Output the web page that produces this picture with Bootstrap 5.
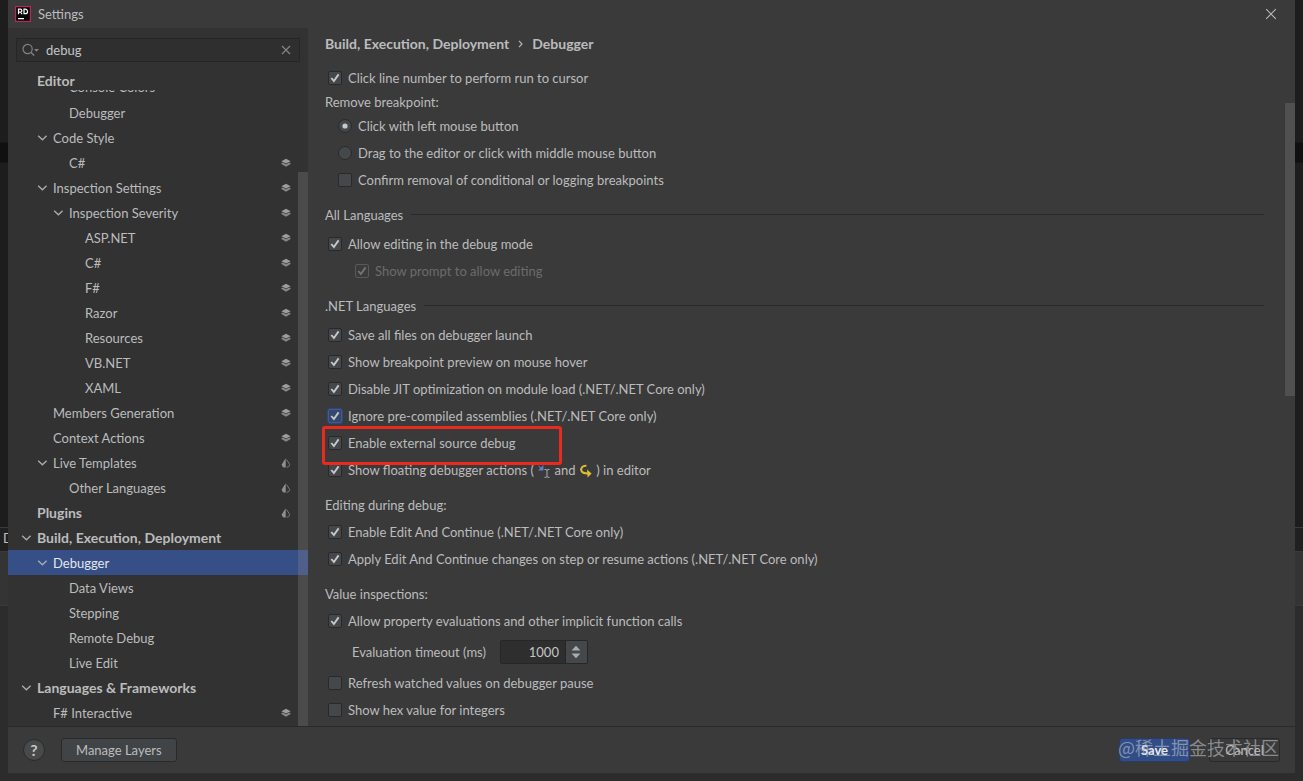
<!DOCTYPE html>
<html lang="en" data-bs-theme="dark">
<head>
<meta charset="utf-8">
<meta name="viewport" content="width=device-width, initial-scale=1">
<title>Settings</title>
<link href="https://cdn.jsdelivr.net/npm/bootstrap@5.3.0/dist/css/bootstrap.min.css" rel="stylesheet">
<style>
  :root {
    --ui-text: #bbbcbd;
    --ui-panel: #3a3a3a;
    --ui-side: #323232;
    --ui-line: #2a2a2b;
    --ui-control: #45484b;
  }
  body {
    background: #2a2a2a;
    color: var(--ui-text);
    font: 13px/20px Lato, "Noto Sans CJK SC", sans-serif;
  }
  b, .strong-text { font-size: 14px; font-weight: 700; }

  /* editor window behind the dialog */
  .backdrop { z-index: -1; background: #2c2c2c; }
  .backdrop > div { border-bottom: 1px solid #3a3a3a; }
  .backdrop > .bd-editor, .backdrop > .bd-current { border-color: #161616; }
  .bd-editor { height: 143px; background: #1d1d1d; }
  .bd-current { height: 20px; background: #101010; }
  .bd-code { height: 365px; background: #1d1d1d; }
  .bd-tabs { height: 24px; background: #202020; padding-left: 3px; }
  .bd-tools { height: 54px; background: #343434; }

  .dialog { height: calc(100vh - 8px); margin: 0 8px; background: var(--ui-panel); }
  .title-bar { height: 28px; padding: 0 17px 0 7px; gap: 7px; }
  .plain-btn { background: none; border: 0; padding: 0; color: inherit; line-height: 0; }

  /* sidebar */
  .sidebar { width: 300px; background: var(--ui-side); }
  .search-box { margin: 10px 8px 7px; height: 24px; border: 1px solid #262626; background: #2f2f2f; padding: 0 8px 0 5px; gap: 6px; }
  .search-box input { background: none; border: 0; outline: 0; padding: 0; color: #c4c5c6; min-width: 0; }
  .tree-sticky { height: 21px; padding: 2px 0 0 29px; }
  .tree-item { height: 25px; padding-right: 17px; color: inherit; text-decoration: none; }
  .tree-item.cut { height: 10px; overflow: hidden; }
  .tree-item.cut span { margin-top: -13px; line-height: 21px; }
  .tree-item > svg:first-child { margin-right: 5px; }
  .tree-item span { white-space: nowrap; }
  .lv1 { padding-left: 29px; } .lv2 { padding-left: 45px; } .lv3 { padding-left: 61px; } .lv4 { padding-left: 77px; }
  .open-item { margin-left: -16px; }
  .tree-item.chosen { background: #365087; color: #e4e6ea; }
  .thumb { position: absolute; right: 0; width: 10px; background: rgba(140, 141, 145, .28); }
  .side-thumb { top: 144px; bottom: 0; }
  .page-thumb { top: 75px; height: 42%; }

  /* settings page */
  .settings-page { padding: 5px 31px 0 17px; }
  .crumbs { height: 22px; margin-bottom: 9px; gap: 9px; }
  .opt { height: 27px; gap: 6px; padding-left: 3px; position: relative; }
  .opt.indent { padding-left: 13px; }
  .opt.nested { padding-left: 30px; margin-bottom: 2px; color: #6b6c6d; }
  .group-label { height: 21px; }
  .section-label { height: 27px; margin-top: 8px; }
  .ruled { margin-bottom: 2px; gap: 8px; }
  .ruled::after { content: ""; flex: 1; height: 1px; background: var(--ui-line); }
  .opt .form-check-input, .opt .form-check-input:focus {
    width: 14px; height: 14px; margin: 0; flex: none; box-shadow: none;
    background-color: var(--ui-control); border: 1px solid #29292b;
  }
  .opt .form-check-input[type=checkbox] { border-radius: 2px; }
  .opt .form-check-input:checked[type=checkbox] {
    background-size: 12px 12px;
    background-image: url("data:image/svg+xml,%3Csvg xmlns='http://www.w3.org/2000/svg' viewBox='0 0 12 12'%3E%3Cpath d='M2.3 6l2.6 3L9.600 2.400' fill='none' stroke='%23c6c8ca' stroke-width='1.9'/%3E%3C/svg%3E");
  }
  .opt .form-check-input:checked[type=radio] {
    background-image: url("data:image/svg+xml,%3Csvg xmlns='http://www.w3.org/2000/svg' viewBox='0 0 12 12'%3E%3Ccircle cx='6' cy='6' r='2.6' fill='%23c6c8ca'/%3E%3C/svg%3E");
  }
  .opt .form-check-input:disabled { opacity: .4; background-color: #3c3d3e; border-color: #86888a; }
  .opt .form-check-input.focused { background-color: #35476a; border-color: #3f5a94; box-shadow: 0 0 0 1px #2f4676; }
  .opt label { opacity: 1 !important; white-space: nowrap; }
  .callout-frame { position: absolute; left: -3px; top: -3px; width: 240px; height: 39px; border: 3px solid #ea2a1f; border-radius: 3px; z-index: 1; pointer-events: none; }
  .timeout-row { height: 35px; padding-left: 27px; gap: 14px; }
  .spinner-box { width: 88px; height: 24px; border: 1px solid #262627; border-radius: 2px; background: #2e2e2e; }
  .spinner-box input { width: 64px; padding: 0 6px 0 0; background: none; border: 0; outline: 0; color: #c4c5c6; text-align: right; }
  .spinner-box .plain-btn { background: var(--ui-control); border-left: 1px solid #262627; }

  /* footer */
  .dialog-footer { height: 47px; border-top: 1px solid var(--ui-line); padding: 0 15px; }
  .help-btn { width: 22px; height: 22px; border: 1px solid #2a2b2c; border-radius: 50%; background: #47494b; color: #c4c5c6; padding: 0; font-size: 16px; font-weight: 700; line-height: 20px; }
  .flat-btn { height: 24px; padding: 0 14px; font-size: 13px; line-height: 20px; color: var(--ui-text); border: 1px solid #29292a; border-radius: 3px; background: #414447; }
  .end-btn { width: 71px; padding: 0; }
  .end-btn + .end-btn { margin-left: 19px; }
  .save-btn { background: #304d88; border-color: #2b3c62; color: #e8ebf0; font-weight: 700; }
  .cancel-btn { background: #3a3a3b; }
  .stamp { position: absolute; right: 16px; top: 7px; font: 18px/26px "Noto Sans CJK SC", sans-serif; color: rgba(190, 193, 198, .6); white-space: nowrap; pointer-events: none; }
</style>
</head>
<body class="overflow-hidden">
<svg class="d-none" aria-hidden="true">
  <symbol id="chev" viewBox="0 0 11 10"><path d="M1.2 2.8l4.2 4 4.2-4" fill="none" stroke="#a9abad" stroke-width="1.4"/></symbol>
  <symbol id="layers" viewBox="0 0 10 10"><path d="M5 .8L9.6 3.2 5 5.6.4 3.2z" fill="#9b9da0"/><path d="M.4 5.2l1.4-.7L5 6.2l3.2-1.7 1.4.7v.9L5 8.8.4 6.1z" fill="#85878a"/></symbol>
  <symbol id="drop" viewBox="0 0 10 10"><path d="M4.7.3v9.2H2.600Q.7 8.400.9 6.200z" fill="#8f9194"/><path d="M5.6 1.6L8.6 6.3Q8.8 8.4 7 9.1H5.6" fill="none" stroke="#77797c"/></symbol>
</svg>

<div class="backdrop position-fixed top-0 start-0 w-100 h-100" aria-hidden="true">
  <div class="bd-editor"></div>
  <div class="bd-current"></div>
  <div class="bd-code"></div>
  <div class="bd-tabs">D</div>
  <div class="bd-tools"></div>
</div>

<div class="dialog d-flex flex-column" role="dialog" aria-label="Settings">
  <header class="title-bar d-flex align-items-center">
    <svg width="16" height="16" viewBox="0 0 16 16" aria-hidden="true"><rect x=".6" y=".6" width="14.8" height="14.8" fill="#050505" stroke="#b9285c" stroke-width="1.2"/><path d="M3.5 8.2V3.2h1.9a1.4 1.4 0 010 2.9H3.6M5.6 6l1.4 2.2M9 3.2v4.5h1.3a2.2 2.2 0 000-4.5zM3 12.6h6" fill="none" stroke="#fff" stroke-width="1.2"/></svg>
    <span>Settings</span>
    <button type="button" class="plain-btn ms-auto" aria-label="Close"><svg width="14" height="14" viewBox="0 0 14 14"><path d="M2.2 2.2l9.6 9.6M11.8 2.2L2.2 11.8" stroke="#b8babc" stroke-width="1.1"/></svg></button>
  </header>

  <div class="d-flex flex-grow-1 overflow-hidden">
    <aside class="sidebar position-relative flex-shrink-0 overflow-hidden">
      <div class="search-box d-flex align-items-center">
        <svg width="18" height="14" viewBox="0 0 18 14" aria-hidden="true"><circle cx="5.6" cy="6" r="4.6" fill="none" stroke="#808285" stroke-width="1.2"/><path d="M9 9.4l3.2 3.2" stroke="#808285" stroke-width="1.4"/><path d="M12 6h5l-2.5 2.8z" fill="#808285"/></svg>
        <input type="text" class="flex-grow-1" value="debug" aria-label="Search settings">
        <button type="button" class="plain-btn" aria-label="Clear search"><svg width="10" height="10" viewBox="0 0 10 10"><path d="M1 1l8 8M9 1L1 9" stroke="#85878a" stroke-width="1.1"/></svg></button>
      </div>
      <nav aria-label="Settings sections">
        <div class="tree-sticky strong-text">Editor</div>
        <a href="#" class="tree-item cut d-flex lv3"><span>Console Colors</span></a>
        <a href="#" class="tree-item d-flex align-items-center lv3"><span>Debugger</span></a>
        <a href="#" class="tree-item d-flex align-items-center lv2"><svg class="open-item" width="11" height="10"><use href="#chev"/></svg><span>Code Style</span></a>
        <a href="#" class="tree-item d-flex align-items-center lv3"><span>C#</span><svg class="ms-auto" width="10" height="10"><use href="#layers"/></svg></a>
        <a href="#" class="tree-item d-flex align-items-center lv2"><svg class="open-item" width="11" height="10"><use href="#chev"/></svg><span>Inspection Settings</span><svg class="ms-auto" width="10" height="10"><use href="#layers"/></svg></a>
        <a href="#" class="tree-item d-flex align-items-center lv3"><svg class="open-item" width="11" height="10"><use href="#chev"/></svg><span>Inspection Severity</span><svg class="ms-auto" width="10" height="10"><use href="#layers"/></svg></a>
        <a href="#" class="tree-item d-flex align-items-center lv4"><span>ASP.NET</span><svg class="ms-auto" width="10" height="10"><use href="#layers"/></svg></a>
        <a href="#" class="tree-item d-flex align-items-center lv4"><span>C#</span><svg class="ms-auto" width="10" height="10"><use href="#layers"/></svg></a>
        <a href="#" class="tree-item d-flex align-items-center lv4"><span>F#</span><svg class="ms-auto" width="10" height="10"><use href="#layers"/></svg></a>
        <a href="#" class="tree-item d-flex align-items-center lv4"><span>Razor</span><svg class="ms-auto" width="10" height="10"><use href="#layers"/></svg></a>
        <a href="#" class="tree-item d-flex align-items-center lv4"><span>Resources</span><svg class="ms-auto" width="10" height="10"><use href="#layers"/></svg></a>
        <a href="#" class="tree-item d-flex align-items-center lv4"><span>VB.NET</span><svg class="ms-auto" width="10" height="10"><use href="#layers"/></svg></a>
        <a href="#" class="tree-item d-flex align-items-center lv4"><span>XAML</span><svg class="ms-auto" width="10" height="10"><use href="#layers"/></svg></a>
        <a href="#" class="tree-item d-flex align-items-center lv2"><span>Members Generation</span><svg class="ms-auto" width="10" height="10"><use href="#layers"/></svg></a>
        <a href="#" class="tree-item d-flex align-items-center lv2"><span>Context Actions</span><svg class="ms-auto" width="10" height="10"><use href="#layers"/></svg></a>
        <a href="#" class="tree-item d-flex align-items-center lv2"><svg class="open-item" width="11" height="10"><use href="#chev"/></svg><span>Live Templates</span><svg class="ms-auto" width="10" height="10"><use href="#drop"/></svg></a>
        <a href="#" class="tree-item d-flex align-items-center lv3"><span>Other Languages</span><svg class="ms-auto" width="10" height="10"><use href="#drop"/></svg></a>
        <a href="#" class="tree-item d-flex align-items-center lv1 strong-text"><span>Plugins</span><svg class="ms-auto" width="10" height="10"><use href="#drop"/></svg></a>
        <a href="#" class="tree-item d-flex align-items-center lv1 strong-text"><svg class="open-item" width="11" height="10"><use href="#chev"/></svg><span>Build, Execution, Deployment</span></a>
        <a href="#" class="tree-item chosen d-flex align-items-center lv2" aria-current="page"><svg class="open-item" width="11" height="10"><use href="#chev"/></svg><span>Debugger</span></a>
        <a href="#" class="tree-item d-flex align-items-center lv3"><span>Data Views</span></a>
        <a href="#" class="tree-item d-flex align-items-center lv3"><span>Stepping</span></a>
        <a href="#" class="tree-item d-flex align-items-center lv3"><span>Remote Debug</span></a>
        <a href="#" class="tree-item d-flex align-items-center lv3"><span>Live Edit</span></a>
        <a href="#" class="tree-item d-flex align-items-center lv1 strong-text"><svg class="open-item" width="11" height="10"><use href="#chev"/></svg><span>Languages &amp; Frameworks</span></a>
        <a href="#" class="tree-item d-flex align-items-center lv2"><span>F# Interactive</span><svg class="ms-auto" width="10" height="10"><use href="#layers"/></svg></a>
      </nav>
      <div class="thumb side-thumb"></div>
    </aside>

    <main class="settings-page position-relative flex-grow-1 overflow-hidden">
      <div class="crumbs d-flex align-items-center"><b>Build, Execution, Deployment</b>
        <svg width="5" height="8" viewBox="0 0 5 8" aria-hidden="true"><path d="M1 .8L4 4 1 7.2" fill="none" stroke="#b4b6b8" stroke-width="1.2"/></svg><b>Debugger</b></div>

      <div class="opt d-flex align-items-center"><input class="form-check-input" type="checkbox" id="o1" checked><label for="o1">Click line number to perform run to cursor</label></div>
      <div class="group-label d-flex align-items-center">Remove breakpoint:</div>
      <div class="opt indent d-flex align-items-center"><input class="form-check-input" type="radio" name="rm" id="o2" checked><label for="o2">Click with left mouse button</label></div>
      <div class="opt indent d-flex align-items-center"><input class="form-check-input" type="radio" name="rm" id="o3"><label for="o3">Drag to the editor or click with middle mouse button</label></div>
      <div class="opt indent d-flex align-items-center"><input class="form-check-input" type="checkbox" id="o4"><label for="o4">Confirm removal of conditional or logging breakpoints</label></div>

      <div class="section-label ruled d-flex align-items-center">All Languages</div>
      <div class="opt d-flex align-items-center"><input class="form-check-input" type="checkbox" id="o5" checked><label for="o5">Allow editing in the debug mode</label></div>
      <div class="opt nested d-flex align-items-center"><input class="form-check-input" type="checkbox" id="o6" checked disabled><label for="o6">Show prompt to allow editing</label></div>

      <div class="section-label ruled d-flex align-items-center">.NET Languages</div>
      <div class="opt d-flex align-items-center"><input class="form-check-input" type="checkbox" id="o7" checked><label for="o7">Save all files on debugger launch</label></div>
      <div class="opt d-flex align-items-center"><input class="form-check-input" type="checkbox" id="o8" checked><label for="o8">Show breakpoint preview on mouse hover</label></div>
      <div class="opt d-flex align-items-center"><input class="form-check-input" type="checkbox" id="o9" checked><label for="o9">Disable JIT optimization on module load (.NET/.NET Core only)</label></div>
      <div class="opt d-flex align-items-center"><input class="form-check-input focused" type="checkbox" id="o10" checked><label for="o10">Ignore pre-compiled assemblies (.NET/.NET Core only)</label></div>
      <div class="opt d-flex align-items-center"><input class="form-check-input" type="checkbox" id="o11" checked><label for="o11">Enable external source debug</label><span class="callout-frame"></span></div>
      <div class="opt d-flex align-items-center"><input class="form-check-input" type="checkbox" id="o12" checked><label for="o12">Show floating debugger actions (
        <svg width="14" height="14" viewBox="0 0 14 14" aria-hidden="true"><path d="M1 1l3 2.4L6.4 1v5.4H1L3 4.6z" fill="#5b83c4"/><path d="M7.5 5.5h1.6l.9.8.9-.8h1.6M10 6v6.6M7.5 13.3h1.6l.9-.8.9.8h1.6" fill="none" stroke="#a9abad"/></svg>
        and
        <svg width="14" height="14" viewBox="0 0 14 14" aria-hidden="true"><path d="M7.4 1.7C3.4 1.4 1.6 4 2.4 6.6 3 8.7 5 9.4 9 9.4" fill="none" stroke="#e0bd2e" stroke-width="2"/><path d="M8 5.4l4.6 4L8.6 13.6z" fill="#e0bd2e"/></svg>
        ) in editor</label></div>

      <div class="section-label d-flex align-items-center">Editing during debug:</div>
      <div class="opt d-flex align-items-center"><input class="form-check-input" type="checkbox" id="o13" checked><label for="o13">Enable Edit And Continue (.NET/.NET Core only)</label></div>
      <div class="opt d-flex align-items-center"><input class="form-check-input" type="checkbox" id="o14" checked><label for="o14">Apply Edit And Continue changes on step or resume actions (.NET/.NET Core only)</label></div>

      <div class="section-label d-flex align-items-center">Value inspections:</div>
      <div class="opt d-flex align-items-center"><input class="form-check-input" type="checkbox" id="o15" checked><label for="o15">Allow property evaluations and other implicit function calls</label></div>
      <div class="timeout-row d-flex align-items-center"><label for="timeout">Evaluation timeout (ms)</label>
        <div class="spinner-box d-flex"><input type="text" inputmode="numeric" id="timeout" value="1000"><button type="button" class="plain-btn flex-grow-1" aria-label="Change timeout"><svg width="10" height="14" viewBox="0 0 10 14"><path d="M.6 5.6L5 .8l4.4 4.8zM.6 8.4L5 13.2l4.4-4.8z" fill="#a9abad"/></svg></button></div></div>
      <div class="opt d-flex align-items-center"><input class="form-check-input" type="checkbox" id="o16"><label for="o16">Refresh watched values on debugger pause</label></div>
      <div class="opt d-flex align-items-center"><input class="form-check-input" type="checkbox" id="o17"><label for="o17">Show hex value for integers</label></div>
      <div class="thumb page-thumb"></div>
    </main>
  </div>

  <footer class="dialog-footer position-relative d-flex align-items-center flex-shrink-0">
    <button type="button" class="help-btn me-3" aria-label="Help">?</button>
    <button type="button" class="btn flat-btn">Manage Layers</button>
    <button type="button" class="btn flat-btn end-btn save-btn ms-auto">Save</button>
    <button type="button" class="btn flat-btn end-btn cancel-btn">Cancel</button>
    <span class="stamp">@稀土掘金技术社区</span>
  </footer>
</div>
<script src="https://cdn.jsdelivr.net/npm/bootstrap@5.3.0/dist/js/bootstrap.bundle.min.js"></script>
</body>
</html>
